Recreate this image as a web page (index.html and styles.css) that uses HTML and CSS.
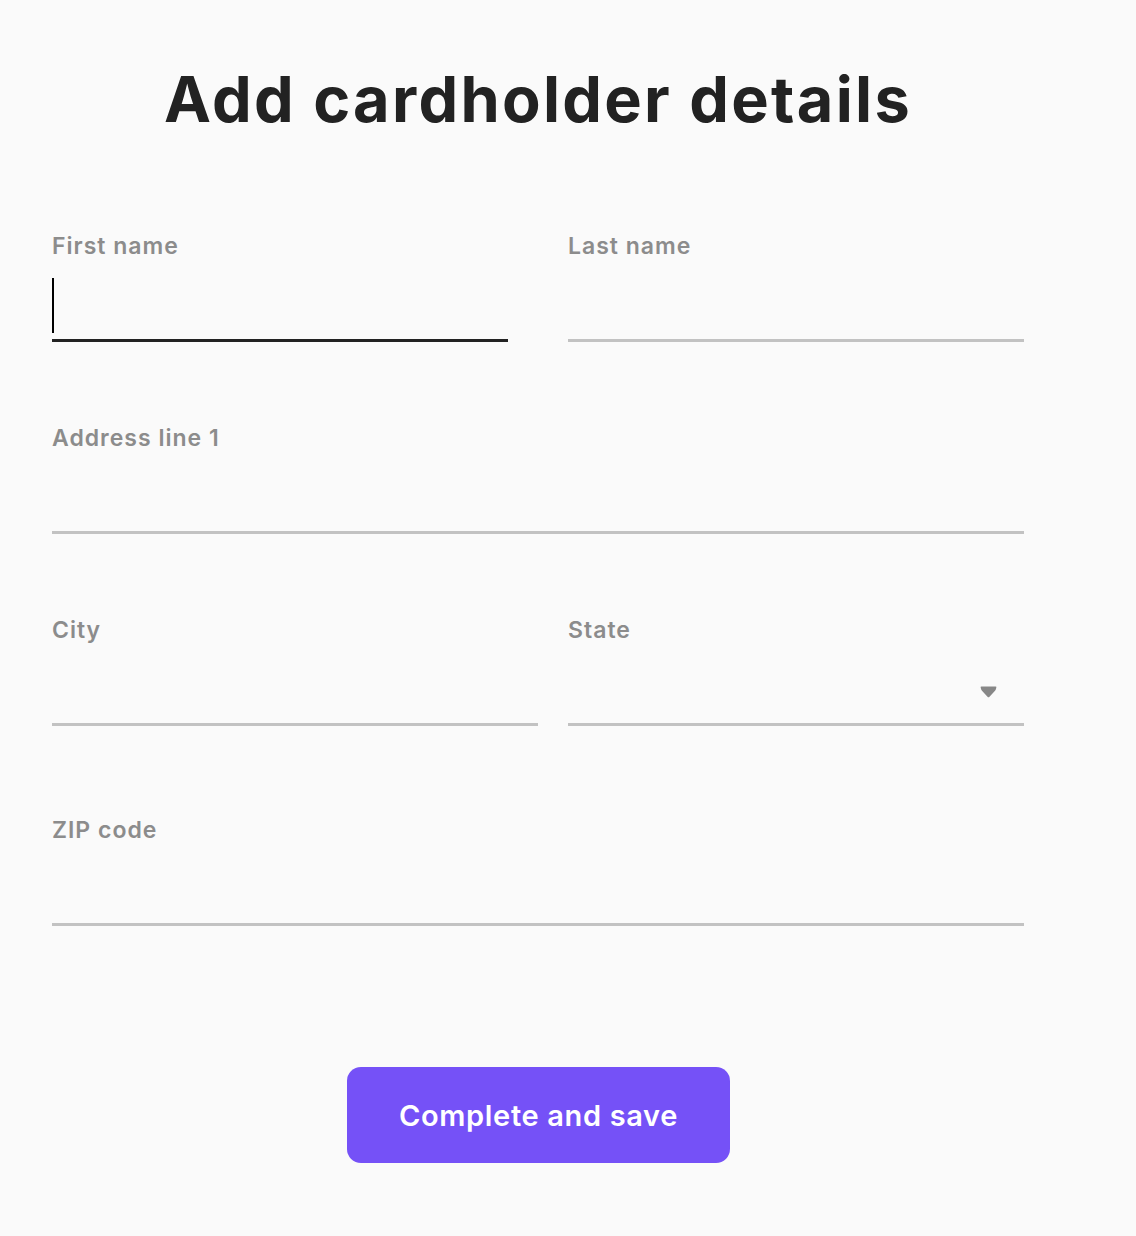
FILE: index.html
```html
<!DOCTYPE html>
<html lang="en">
<head>
<meta charset="utf-8">
<title>Add cardholder details</title>
<link rel="stylesheet" href="styles.css">
</head>
<body>
<main class="page">
  <h1 class="title">Add cardholder details</h1>
  <form class="form">
    <div class="row row-names">
      <div class="field">
        <div class="label">First name</div>
        <div class="input input-focused"><span class="caret"></span></div>
      </div>
      <div class="field">
        <div class="label">Last name</div>
        <div class="input"></div>
      </div>
    </div>
    <div class="row">
      <div class="field">
        <div class="label">Address line 1</div>
        <div class="input"></div>
      </div>
    </div>
    <div class="row row-city">
      <div class="field">
        <div class="label">City</div>
        <div class="input"></div>
      </div>
      <div class="field">
        <div class="label">State</div>
        <div class="input input-select">
          <svg class="dropdown" width="17" height="12" viewBox="0 0 17 12" aria-hidden="true">
            <path d="M1.5 0.5 H15.5 Q16.8 0.5 16.3 1.8 L15.8 3.6 Q15.5 4.4 14.8 4.9 L9.5 10.8 Q8.5 11.8 7.5 10.8 L2.2 4.9 Q1.5 4.4 1.2 3.6 L0.7 1.8 Q0.2 0.5 1.5 0.5 Z" fill="#878787"/>
          </svg>
        </div>
      </div>
    </div>
    <div class="row row-zip">
      <div class="field">
        <div class="label">ZIP code</div>
        <div class="input"></div>
      </div>
    </div>
    <div class="actions">
      <button type="button" class="btn">Complete and save</button>
    </div>
  </form>
</main>
</body>
</html>
```
FILE: styles.css
```css
html, body {
  margin: 0;
  padding: 0;
  background: #fafafa;
}

body {
  font-family: Inter, "Noto Sans", "Liberation Sans", sans-serif;
  color: #222222;
}

.page {
  width: 972px;
  margin-left: 52px;
  padding-top: 68px;
}

.title {
  margin: 0;
  text-align: center;
  font-size: 63px;
  line-height: 63px;
  font-weight: 700;
  letter-spacing: 2.3px;
  color: #222222;
}

.form {
  display: flex;
  flex-direction: column;
  margin-top: 103px;
}

.row {
  display: grid;
  grid-template-columns: 1fr;
}

.row + .row {
  margin-top: 84px;
}

.row-names {
  grid-template-columns: 456px 456px;
  column-gap: 60px;
}

.row-city {
  grid-template-columns: 486px 456px;
  column-gap: 30px;
}

.row.row-zip {
  margin-top: 92px;
}

.field {
  display: flex;
  flex-direction: column;
}

.label {
  font-size: 23px;
  line-height: 24px;
  font-weight: 600;
  letter-spacing: 1px;
  color: #8c8c8c;
}

.input {
  height: 81px;
  border-bottom: 3px solid #c2c2c2;
  display: flex;
  align-items: center;
}

.input-focused {
  border-bottom-color: #222222;
  align-items: flex-start;
}

.caret {
  display: block;
  width: 2px;
  height: 55px;
  margin-top: 20px;
  background: #000000;
}

.input-select {
  justify-content: flex-end;
  align-items: flex-start;
}

.dropdown {
  display: block;
  margin-top: 44px;
  margin-right: 27px;
}

.actions {
  display: flex;
  justify-content: center;
  margin-top: 141px;
}

.btn {
  width: 383px;
  height: 96px;
  border: none;
  border-radius: 14px;
  background: #7551f7;
  color: #ffffff;
  font-family: Inter, "Noto Sans", "Liberation Sans", sans-serif;
  font-size: 29px;
  font-weight: 600;
  letter-spacing: 0.65px;
  padding: 0;
  margin-left: 1px;
  cursor: pointer;
}
```
